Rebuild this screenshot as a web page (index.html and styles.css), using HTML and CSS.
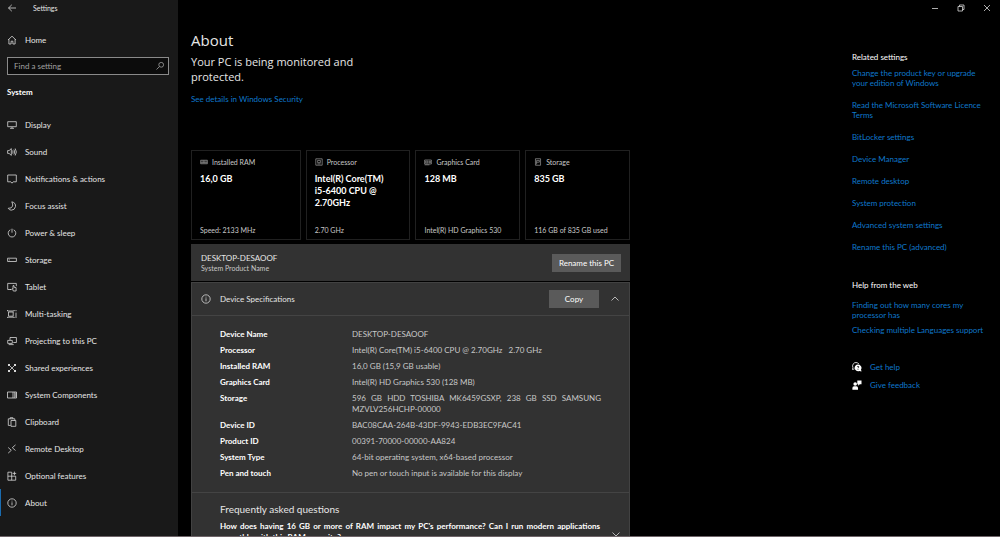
FILE: index.html
```html
<!DOCTYPE html>
<html lang="en">
	<head>
		<meta charset="utf-8">
		<title>Settings</title>
		<link rel="stylesheet" href="styles.css">
	</head>
	<body>
		<div class="window">
			<div class="sidebar">
				<div class="top">
					<button class="back" aria-label="Back"><svg viewBox="0 0 10 10"><path d="M9 5H1.5M4.8 1.8L1.5 5l3.3 3.2"/></svg></button>
					<span>Settings</span>
				</div>
				<a href="#" class="item home"><svg viewBox="0 0 10 10"><path d="M1 5L5 1.2 9 5M1.9 4.3V9h2.2V6.2h1.8V9h2.2V4.3"/></svg>Home</a>
				<div class="search">
					<input type="text" placeholder="Find a setting" aria-label="Find a setting">
					<svg viewBox="0 0 10 10"><circle cx="6.2" cy="3.8" r="2.4"/><path d="M4.500 5.500L1.500 8.500"/></svg>
				</div>
				<h2>System</h2>
				<nav>
					<a href="#" class="item"><svg viewBox="0 0 10 10"><path d="M.7 1.700h8.600v5H.7zM3 8.300h4M5 7v1.300"/></svg>Display</a>
					<a href="#" class="item"><svg viewBox="0 0 10 10"><path d="M.6 3.600h1.500L4.300 1.600v6.800L2.100 6.400H.6zM5.600 3.500q1 1.500 0 3M6.900 2.500q1.700 2.500 0 5M8.200 1.500q2.300 3.500 0 7"/></svg>Sound</a>
					<a href="#" class="item"><svg viewBox="0 0 10 10"><path d="M.7 1h8.600v6.800H6.200L5 9.200 3.800 7.800H.7z"/></svg>Notifications &amp; actions</a>
					<a href="#" class="item"><svg viewBox="0 0 10 10"><path d="M4.800.8q4.200 1 3.700 4.800Q7.800 9.200 4.200 9.200 2.200 9 1.200 7.300q3.600.3 4.400-2.300Q6 3.200 4.800.8z"/></svg>Focus assist</a>
					<a href="#" class="item"><svg viewBox="0 0 10 10"><path d="M3.300 1.800a3.800 3.800 0 1 0 3.400 0M5 .7v4"/></svg>Power &amp; sleep</a>
					<a href="#" class="item"><svg viewBox="0 0 10 10"><path d="M.6 3.200h8.800v3.300H.6zM1.800 4.900h1"/></svg>Storage</a>
					<a href="#" class="item"><svg viewBox="0 0 10 10"><path d="M4.300 7.500H.7V1.400h8.600v2.800M3 7.500h1.500"/><path d="M5.300 6.200L6.300 9h2.800V5.700L7 5.200V3.600H6v3.200"/></svg>Tablet</a>
					<a href="#" class="item"><svg viewBox="0 0 10 10"><path d="M1.500 3h4.700v4.200H1.500zM.5 1v1h6.700V1M.5 9V8.200h6.700V9M9 1v1.200M9 3.600V9"/></svg>Multi-tasking</a>
					<a href="#" class="item"><svg viewBox="0 0 10 10"><path d="M3 4V1.500h6.400v5H6.300M.7 4.400h4.600v3H.7zM1.700 8.600h5"/></svg>Projecting to this PC</a>
					<a href="#" class="item"><svg viewBox="0 0 10 10"><path d="M2 2l6 6M8 2L2 8"/><path class="dots" d="M1 1h2v2H1zM7 1h2v2H7zM1 7h2v2H1zM7 7h2v2H7z"/></svg>Shared experiences</a>
					<a href="#" class="item"><svg viewBox="0 0 10 10"><path d="M.5 2h9v6h-9zM6 2v6M7.800 2v6M7.800 4h1.700M7.800 6h1.700"/></svg>System Components</a>
					<a href="#" class="item"><svg viewBox="0 0 10 10"><path d="M3.700 8.400H1.300V1.800h6.500v1.700M3.200 1.800V.7h2.700v1.100M4 3.500h4.800v5.800H4z"/></svg>Clipboard</a>
					<a href="#" class="item"><svg viewBox="0 0 10 10"><path d="M1.200 3.500L4.300 6.300 1.200 9.100M8.500.9L5.300 3.700l3.200 2.800"/></svg>Remote Desktop</a>
					<a href="#" class="item"><svg viewBox="0 0 10 10"><path d="M4.700 1.200H.9v8h7.800V5.200H.9M4.700 1.200v8M7.400.6v3.600M5.600 2.400h3.600"/></svg>Optional features</a>
					<a href="#" class="item active"><svg viewBox="0 0 10 10"><circle cx="5" cy="5" r="4.200"/><path d="M5 4.300v3M5 2.700v.8"/></svg>About</a>
				</nav>
			</div>

			<div class="main">
				<div class="controls">
					<button aria-label="Minimise"><svg viewBox="0 0 10 10"><path d="M2 5.500h6"/></svg></button>
					<button aria-label="Restore"><svg viewBox="0 0 10 10"><path d="M2 3.500h4.500V8H2zM3.500 3.500V2H8v4.500H6.500"/></svg></button>
					<button aria-label="Close"><svg viewBox="0 0 10 10"><path d="M2 2l6 6M8 2L2 8"/></svg></button>
				</div>
				<div class="columns">
					<div class="content">
						<h1>About</h1>
						<p class="status">Your PC is being monitored and protected.</p>
						<a href="#" class="security">See details in Windows Security</a>

						<div class="cards">
							<div class="card">
								<h3><svg viewBox="0 0 10 10"><path d="M.8 2.800h8.400v4.400H.8zM2.500 3v3M4.200 3v3M5.900 3v3M7.600 3v3M1 6h8"/></svg>Installed RAM</h3>
								<strong>16,0 GB</strong>
								<p>Speed: 2133 MHz</p>
							</div>
							<div class="card">
								<h3><svg viewBox="0 0 10 10"><path d="M1 1h8v8H1zM3.300 3h3.400v2.800H3.300zM3 7.400h4"/></svg>Processor</h3>
								<strong>Intel(R) Core(TM)<br>i5-6400 CPU @<br>2.70GHz</strong>
								<p>2.70 GHz</p>
							</div>
							<div class="card">
								<h3><svg viewBox="0 0 10 10"><path d="M.8 2.500h8.400v5H.8zM.8 8.500h6M2 4h3v2H2zM6.500 4H8v2H6.500z"/></svg>Graphics Card</h3>
								<strong>128 MB</strong>
								<p>Intel(R) HD Graphics 530</p>
							</div>
							<div class="card">
								<h3><svg viewBox="0 0 10 10"><path d="M1.800.9h6.400v8.200H1.800zM3.300 3h3.400v2.200H3.300zM3.300 5v3"/></svg>Storage</h3>
								<strong>835 GB</strong>
								<p>116 GB of 835 GB used</p>
							</div>
						</div>

						<div class="device">
							<div>
								<div class="name">DESKTOP-DESAOOF</div>
								<div class="product">System Product Name</div>
							</div>
							<button class="btn">Rename this PC</button>
						</div>

						<div class="specs">
							<div class="specs-head">
								<svg viewBox="0 0 10 10"><circle cx="5" cy="5" r="4.200"/><path d="M5 4.300v3M5 2.700v.8"/></svg>
								<h2>Device Specifications</h2>
								<button class="btn copy">Copy</button>
								<button class="toggle" aria-label="Collapse"><svg viewBox="0 0 10 10"><path d="M1.500 6.500L5 3l3.500 3.500"/></svg></button>
							</div>
							<table>
								<tr><th scope="row">Device Name</th><td>DESKTOP-DESAOOF</td></tr>
								<tr><th scope="row">Processor</th><td>Intel(R) Core(TM) i5-6400 CPU @ 2.70GHz &nbsp; 2.70 GHz</td></tr>
								<tr><th scope="row">Installed RAM</th><td>16,0 GB (15,9 GB usable)</td></tr>
								<tr><th scope="row">Graphics Card</th><td>Intel(R) HD Graphics 530 (128 MB)</td></tr>
								<tr><th scope="row">Storage</th><td>596 GB HDD TOSHIBA MK6459GSXP, 238 GB SSD SAMSUNG MZVLV256HCHP-00000</td></tr>
								<tr><th scope="row">Device ID</th><td>BAC08CAA-264B-43DF-9943-EDB3EC9FAC41</td></tr>
								<tr><th scope="row">Product ID</th><td>00391-70000-00000-AA824</td></tr>
								<tr><th scope="row">System Type</th><td>64-bit operating system, x64-based processor</td></tr>
								<tr><th scope="row">Pen and touch</th><td>No pen or touch input is available for this display</td></tr>
							</table>
							<div class="faq">
								<h2>Frequently asked questions</h2>
								<div class="question">
									<p>How does having 16 GB or more of RAM impact my PC's performance? Can I run modern applications smoothly with this RAM capacity?</p>
									<button class="toggle" aria-label="Expand"><svg viewBox="0 0 10 10"><path d="M1.500 3.500L5 7l3.500-3.500"/></svg></button>
								</div>
							</div>
						</div>
					</div>

					<div class="related">
						<h2>Related settings</h2>
						<ul>
							<li><a href="#">Change the product key or upgrade your edition of Windows</a></li>
							<li><a href="#">Read the Microsoft Software Licence Terms</a></li>
							<li><a href="#">BitLocker settings</a></li>
							<li><a href="#">Device Manager</a></li>
							<li><a href="#">Remote desktop</a></li>
							<li><a href="#">System protection</a></li>
							<li><a href="#">Advanced system settings</a></li>
							<li><a href="#">Rename this PC (advanced)</a></li>
						</ul>
						<h2 class="web">Help from the web</h2>
						<ul class="help">
							<li><a href="#">Finding out how many cores my processor has</a></li>
							<li><a href="#">Checking multiple Languages support</a></li>
						</ul>
						<ul class="contact">
							<li><svg viewBox="0 0 10 10"><path d="M4 .5A3.500 3.500 0 0 0 .9 5.500L.5 7.500l2-.6M4 .5a3.400 3.400 0 0 1 3 1.700" class="line"/><path d="M6 2.600a3.300 3.300 0 1 0 1.300 6.300L9.500 9.500 9 7.600A3.300 3.300 0 0 0 6 2.600z"/><path d="M5.200 4.800q.8-1 1.500-.2.300.7-.7 1.300v.4M6 7v.7" class="mark"/></svg><a href="#">Get help</a></li>
							<li><svg viewBox="0 0 10 10"><circle cx="3.200" cy="4" r="1.800"/><path d="M.4 9.700V8q0-1.700 1.700-1.700h2.400Q6 6.300 6 8v1.700zM5.300.6h4.200v3.600H7.800L6.200 5.700V4.200h-.9z"/></svg><a href="#">Give feedback</a></li>
						</ul>
					</div>
				</div>
			</div>
		</div>
	</body>
</html>
```
FILE: styles.css
```css
*{margin:0;padding:0;box-sizing:border-box;}
body{
	background:#000;
	color:#e6e6e6;
	font:8px/10px Lato,"Open Sans",sans-serif;
}
ul{list-style:none;}
a{color:#0f78cc;text-decoration:none;}
button{
	border:0;
	background:none;
	color:inherit;
	font:inherit;
}
svg{
	display:block;
	flex:none;
	width:10px;
	height:10px;
	fill:none;
	stroke:#d8d8d8;
	stroke-width:.8;
}
.window{
	display:flex;
	height:100vh;
	overflow:hidden;
	border-bottom:1px solid #6e6468;
}

/* left menu */
.sidebar{
	flex:none;
	width:178px;
	background:#191919;
}
.top{
	display:flex;
	align-items:center;
	gap:16px;
	height:16px;
	padding-left:7px;
	font-size:7px;
}
.item{
	display:flex;
	align-items:center;
	gap:8px;
	height:27px;
	padding-left:7px;
	color:#e6e6e6;
}
.home{margin-top:10px;}
.search{
	display:flex;
	align-items:center;
	height:18px;
	margin:4px 9px 0 7px;
	padding:0 3px 0 6px;
	border:1px solid #8a8a8a;
	background:#0c0c0c;
}
.search svg{stroke:#a0a0a0;}
.search input{
	flex:1;
	min-width:0;
	border:0;
	outline:0;
	background:none;
	color:#e6e6e6;
	font:inherit;
}
.search input::placeholder{color:#a0a0a0;}
.sidebar h2{
	margin:12px 0 14px 7px;
	font-size:8px;
	color:#fff;
}
.active{box-shadow:inset 1px 0 #1a6cb0;}

/* right part */
.main{
	flex:1;
	display:flex;
	flex-direction:column;
	min-width:0;
}
.controls{
	flex:none;
	display:flex;
	justify-content:flex-end;
	align-items:center;
	gap:16px;
	height:16px;
	padding-right:8px;
}
.columns{
	display:flex;
	justify-content:space-between;
	padding:0 12px 0 13px;
}
.content{
	flex:0 1 439px;
	padding-top:14px;
}
h1,.status{font-family:"Open Sans",sans-serif;}
h1{
	font-size:15px;
	line-height:20px;
	font-weight:400;
}
.status{
	max-width:180px;
	margin:4px 0 10px;
	font-size:11px;
	line-height:15px;
}
.security{display:block;}
.cards{
	display:grid;
	grid-template-columns:22fr 21fr 21fr 21fr;
	gap:5px;
	margin-top:46px;
}
.card{
	display:flex;
	flex-direction:column;
	height:90px;
	padding:6px 8px 4px;
	border:1px solid #202020;
}
.card h3{
	display:flex;
	align-items:center;
	gap:4px;
	font-size:7px;
	font-weight:400;
	color:#c8c8c8;
}
.card svg{width:8px;height:8px;stroke:#a8a8a8;}
.card strong{
	margin-top:6px;
	font-size:9px;
	line-height:12px;
	color:#fff;
}
.card p{
	margin-top:auto;
	font-size:7px;
	color:#c8c8c8;
}
.device{
	display:flex;
	align-items:center;
	justify-content:space-between;
	height:37px;
	margin:4px 0 1px;
	padding:0 9px 0 10px;
	background:#323232;
}
.product{
	font-size:7px;
	color:#c8c8c8;
}
.btn{
	width:69px;
	height:18px;
	background:#5a5a5a;
	color:#fff;
}
.specs{
	border:1px solid #424242;
	background:#323232;
}
.specs-head{
	display:flex;
	align-items:center;
	height:33px;
	padding:0 9px;
	border-bottom:1px solid #444;
}
.specs-head h2{
	margin:0 auto 0 9px;
	font-size:8px;
	font-weight:400;
}
.copy{width:50px;}
.toggle{margin-left:11px;}
.specs table{
	width:100%;
	padding:10px 28px 11px;
	border-spacing:0;
}
.specs th,.specs td{
	padding:3px 0 2px;
	line-height:11px;
	vertical-align:top;
}
.specs th{
	width:132px;
	text-align:left;
	color:#fff;
}
.specs td{
	color:#c8c8c8;
	text-align:justify;
}
.faq{
	padding:9px 8px 8px 28px;
	border-top:1px solid #444;
}
.faq h2{
	font-size:10px;
	line-height:14px;
	font-weight:400;
}
.question{
	display:flex;
	align-items:flex-end;
}
.question p{
	flex:1;
	padding:5px 0 0;
	font-weight:700;
	line-height:11px;
	text-align:justify;
	color:#fff;
}
.question .toggle{padding-bottom:4px;}

/* related links */
.related{
	flex:none;
	width:136px;
	padding-top:36px;
}
.related h2{
	margin-bottom:6px;
	font-size:8px;
	font-weight:400;
	color:#fff;
}
.related li{margin-bottom:12px;}
.related .web{margin:28px 0 10px;}
.related .help li{margin-bottom:5px;}
.contact{margin-top:27px;}
.related .contact li{
	display:flex;
	gap:8px;
	margin-bottom:8px;
}
.contact svg{
	fill:#fff;
	stroke:none;
}
.contact .line{
	fill:none;
	stroke:#fff;
}
.contact .mark{
	fill:none;
	stroke:#000;
}
.item .dots{
	fill:#d8d8d8;
	stroke:none;
}
```
